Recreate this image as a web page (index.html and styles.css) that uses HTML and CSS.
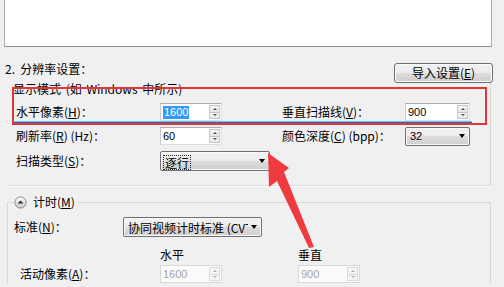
FILE: index.html
```html
<!DOCTYPE html>
<html lang="zh-CN">
<head>
<meta charset="utf-8">
<title>分辨率设置</title>
<link rel="stylesheet" href="styles.css">
</head>
<body>
<div class="page">
  <div class="textbox"></div>

  <div class="res-head">
    <span class="title">2.&nbsp;&nbsp;分辨率设置：</span>
    <button class="btn">导入设置(<u>E</u>)</button>
  </div>

  <div class="group">
    <div class="mode-label">显示模式 (如 Windows 中所示)</div>
    <div class="grid">
      <span class="lbl">水平像素(<u>H</u>)：</span>
      <div class="spin-input w62"><span class="val"><span class="sel">1600</span></span><span class="spin"><i class="up"></i><i class="dn"></i></span></div>
      <span class="lbl">垂直扫描线(<u>V</u>)：</span>
      <div class="spin-input w65"><span class="val">900</span><span class="spin"><i class="up"></i><i class="dn"></i></span></div>

      <span class="lbl">刷新率(<u>R</u>) (Hz)：</span>
      <div class="spin-input w62"><span class="val">60</span><span class="spin"><i class="up"></i><i class="dn"></i></span></div>
      <span class="lbl">颜色深度(<u>C</u>) (bpp)：</span>
      <div class="combo w65 pad5"><span class="ctext num">32</span><i class="caret"></i></div>

      <span class="lbl">扫描类型(<u>S</u>)：</span>
      <div class="combo w110 span2"><span class="ctext"><span class="focus">逐行</span></span><i class="caret"></i></div>
    </div>
  </div>

  <fieldset class="timing">
    <legend><svg class="collapse" width="13" height="13" viewBox="0 0 13 13"><defs><linearGradient id="cg" x1="0" y1="0" x2="0" y2="1"><stop offset="0" stop-color="#ffffff"/><stop offset="1" stop-color="#c8c8c8"/></linearGradient></defs><circle cx="6.5" cy="6.5" r="5.6" fill="url(#cg)" stroke="#8c8c8c" stroke-width="1"/><polygon points="3.6,7.6 9.4,7.6 6.5,4.6" fill="#2a2a2a"/></svg><span class="legend-text">计时(<u>M</u>)</span></legend>
    <div class="std-row">
      <span class="lbl std">标准(<u>N</u>)：</span>
      <div class="combo w139 pad5"><span class="ctext">协同视频计时标准 (CVT)</span><i class="caret"></i></div>
    </div>
    <div class="px-grid">
      <span></span><span class="head">水平</span><span class="head">垂直</span>
      <span class="lbl act">活动像素(<u>A</u>)：</span>
      <div class="spin-input w62 disabled"><span class="val">1600</span><span class="spin"><i class="up"></i><i class="dn"></i></span></div>
      <div class="spin-input w62 disabled"><span class="val">900</span><span class="spin"><i class="up"></i><i class="dn"></i></span></div>
    </div>
  </fieldset>

  <div class="redbox"></div>
  <div class="blueline"></div>
  <svg class="arrow" width="504" height="287" viewBox="0 0 504 287"><polygon points="268,153 289,168 284,172 314,247 309,248 277,181 269,187" fill="#ef3a3f"/></svg>
</div>
</body>
</html>
```

FILE: styles.css
```css
* { box-sizing: border-box; }
html, body { margin: 0; padding: 0; }
body {
  background: #f0f0f0;
  font-family: "Noto Sans CJK SC", "Noto Sans", sans-serif;
  font-size: 12px;
  line-height: 14px;
  color: #000;
}
.page {
  position: relative;
  width: 504px;
  height: 287px;
  overflow: hidden;
}
u { text-decoration: underline; text-underline-offset: 1px; }

.textbox {
  margin-left: 4px;
  width: 488px;
  height: 47px;
  background: #fff;
  border: 1px solid #abadb3;
  border-top: none;
  border-bottom-color: #8e9196;
}

.res-head {
  display: flex;
  justify-content: space-between;
  align-items: flex-start;
  margin-top: 15px;
  padding: 0 11px 0 5px;
  height: 21px;
}
.btn {
  margin-top: 1px;
  width: 99px;
  height: 20px;
  padding: 0;
  border: 1px solid #707070;
  border-radius: 3px;
  background: linear-gradient(#f2f2f2 0%, #ebebeb 50%, #dddddd 50%, #cfcfcf 100%);
  box-shadow: inset 0 0 0 1px #fbfbfb;
  font: inherit;
  color: #000;
}

.group {
  margin: -1px 13px 0 7px;
  padding: 0 0 14px 0;
  border-right: 1px solid #d9d9d9;
  border-bottom: 1px solid #d9d9d9;
  box-shadow: 0 1px 0 #fff;
}
.mode-label { padding-left: 6px; word-spacing: 2px; }

.grid {
  display: grid;
  grid-template-columns: 144px 122px 123px 65px;
  grid-template-rows: 18px 18px 20px;
  row-gap: 6px;
  align-items: center;
  margin-top: 7px;
  padding-left: 9px;
}
.lbl { white-space: nowrap; }
.span2 { grid-column: span 2; }

.w62 { width: 62px; }
.w65 { width: 65px; }
.w110 { width: 110px; }
.w139 { width: 139px; }

.spin-input {
  display: flex;
  height: 18px;
  background: #fff;
  border: 1px solid #dbdfe6;
  border-top-color: #abadb3;
  border-left-color: #c5c8cf;
}
.spin-input .val {
  flex: 1;
  padding-left: 2px;
  font: 11px/16px "Liberation Sans", Arial, sans-serif;
  color: #000;
}
.sel {
  background: #3399ff;
  color: #fff;
  padding: 0 1px 0 1px;
  display: inline-block;
  line-height: 13px;
  margin-top: 1px;
}
.spin {
  width: 11px;
  display: flex;
  flex-direction: column;
  margin: 1px 1px 1px 0;
}
.spin i {
  flex: 1;
  display: flex;
  align-items: center;
  justify-content: center;
  border: 1px solid #c2c4ca;
  background: linear-gradient(#fafafa, #e3e3e3);
}
.spin i + i { border-top: none; }
.spin i::after {
  content: "";
  width: 0;
  height: 0;
  border-left: 2px solid transparent;
  border-right: 2px solid transparent;
}
.spin .up::after { border-bottom: 2px solid #4d4d4d; }
.spin .dn::after { border-top: 2px solid #4d4d4d; }

.disabled { background: #fbfbfb; border-color: #d8d8d8; }
.disabled .val { color: #a3a3a3; }
.disabled .spin i { border-color: #dadada; background: #f4f4f4; }
.disabled .spin i::after { opacity: 0.4; }

.combo {
  display: flex;
  align-items: center;
  height: 19px;
  padding-left: 2px;
  border: 1px solid #707070;
  border-radius: 2px;
  background: linear-gradient(#f2f2f2 0%, #ebebeb 50%, #dddddd 50%, #cfcfcf 100%);
  box-shadow: inset 0 0 0 1px #f8f8f8;
}
.combo.w110 { height: 20px; }
.pad5 { padding-left: 4px; }
.ctext {
  flex: 1;
  overflow: hidden;
  white-space: nowrap;
  line-height: 17px;
}
.ctext.num { font: 11px/14px "Liberation Sans", Arial, sans-serif; }
.focus {
  display: inline-block;
  vertical-align: middle;
  border: 1px dotted #222;
  padding: 0 1px;
  line-height: 13px;
}
.caret {
  width: 0;
  height: 0;
  margin: 0 4px 0 3px;
  border-left: 3.5px solid transparent;
  border-right: 3.5px solid transparent;
  border-top: 4px solid #000;
}

.timing {
  margin: 9px 13px 0 7px;
  padding: 0 0 0 6px;
  border: 1px solid #d9d9d9;
  border-bottom: none;
  min-width: 0;
}
.timing legend {
  display: flex;
  align-items: center;
  gap: 6px;
  padding: 0 3px 0 0;
  margin: 0;
  height: 14px;
}
.collapse { display: block; }

.std-row {
  display: flex;
  align-items: center;
  margin-top: 8px;
  height: 20px;
}
.std { width: 109px; }
.w139 { height: 20px; }

.px-grid {
  display: grid;
  grid-template-columns: 146px 138px 62px;
  grid-template-rows: 14px 18px;
  row-gap: 3px;
  align-items: center;
  margin-top: 11px;
}
.act { padding-left: 6px; }

.redbox {
  position: absolute;
  left: 12px;
  top: 87px;
  width: 475px;
  height: 38px;
  border: 2px solid #e3343a;
}
.blueline {
  position: absolute;
  left: 14px;
  top: 121px;
  width: 458px;
  height: 2px;
  border-top: 1px solid #5cc8ee;
  border-bottom: 1px solid #3d62b4;
}
.arrow {
  position: absolute;
  left: 0;
  top: 0;
}
```
